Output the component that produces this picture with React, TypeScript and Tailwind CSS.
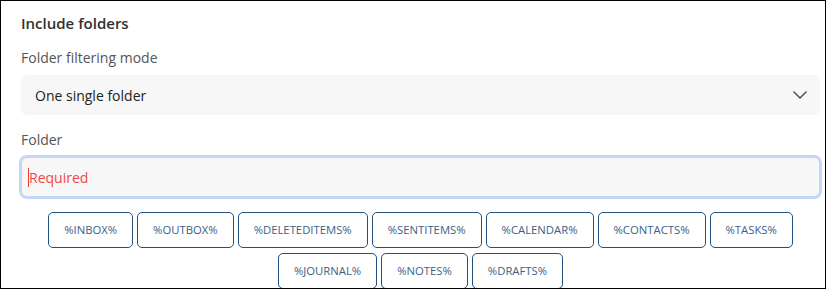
import React from "react";

const row1 = ["%INBOX%", "%OUTBOX%", "%DELETEDITEMS%", "%SENTITEMS%", "%CALENDAR%", "%CONTACTS%", "%TASKS%"];
const row2 = ["%JOURNAL%", "%NOTES%", "%DRAFTS%"];

function Tag({ label }: { label: string }) {
  return (
    <button
      type="button"
      className="h-[36px] px-[15px] rounded-[5px] border border-[#1f5080] bg-white text-[11.3px] text-[#3b6189] leading-none whitespace-nowrap"
    >
      {label}
    </button>
  );
}

export default function App() {
  return (
    <div
      className="w-[826px] h-[289px] border border-black bg-white overflow-hidden pl-5 pr-[5px] pt-3"
      style={{ fontFamily: '"Open Sans", "Noto Sans", sans-serif' }}
    >
      <div className="text-[15px] leading-5 font-semibold text-[#323130]">Include folders</div>
      <div className="mt-[15px] text-[14px] leading-5 text-[#555]">Folder filtering mode</div>
      <div className="mt-[7px] h-10 rounded-md bg-[#f7f7f7] flex items-center justify-between pl-[14px] pr-[13px]">
        <span className="text-[14px] text-[#222]">One single folder</span>
        <svg width="14" height="8" viewBox="0 0 14 8" fill="none">
          <path d="M1 1l6 6 6-6" stroke="#444" strokeWidth="1.4" strokeLinecap="round" strokeLinejoin="round" />
        </svg>
      </div>
      <div className="mt-[15px] text-[14px] leading-5 text-[#555]">Folder</div>
      <div className="mt-[7px] h-10 rounded-md bg-[#f7f7f7] border border-[#c5d7f8] ring-2 ring-[#c5d7f8] flex items-center pl-[6px]">
        <span className="w-px h-[19px] bg-[#e83a3a]" />
        <span className="text-[14px] text-[#f04848]">Required</span>
      </div>
      <div className="mt-[15px] flex flex-col items-center gap-[5px]">
        <div className="flex gap-1">
          {row1.map((l) => (
            <Tag key={l} label={l} />
          ))}
        </div>
        <div className="flex gap-1">
          {row2.map((l) => (
            <Tag key={l} label={l} />
          ))}
        </div>
      </div>
    </div>
  );
}
